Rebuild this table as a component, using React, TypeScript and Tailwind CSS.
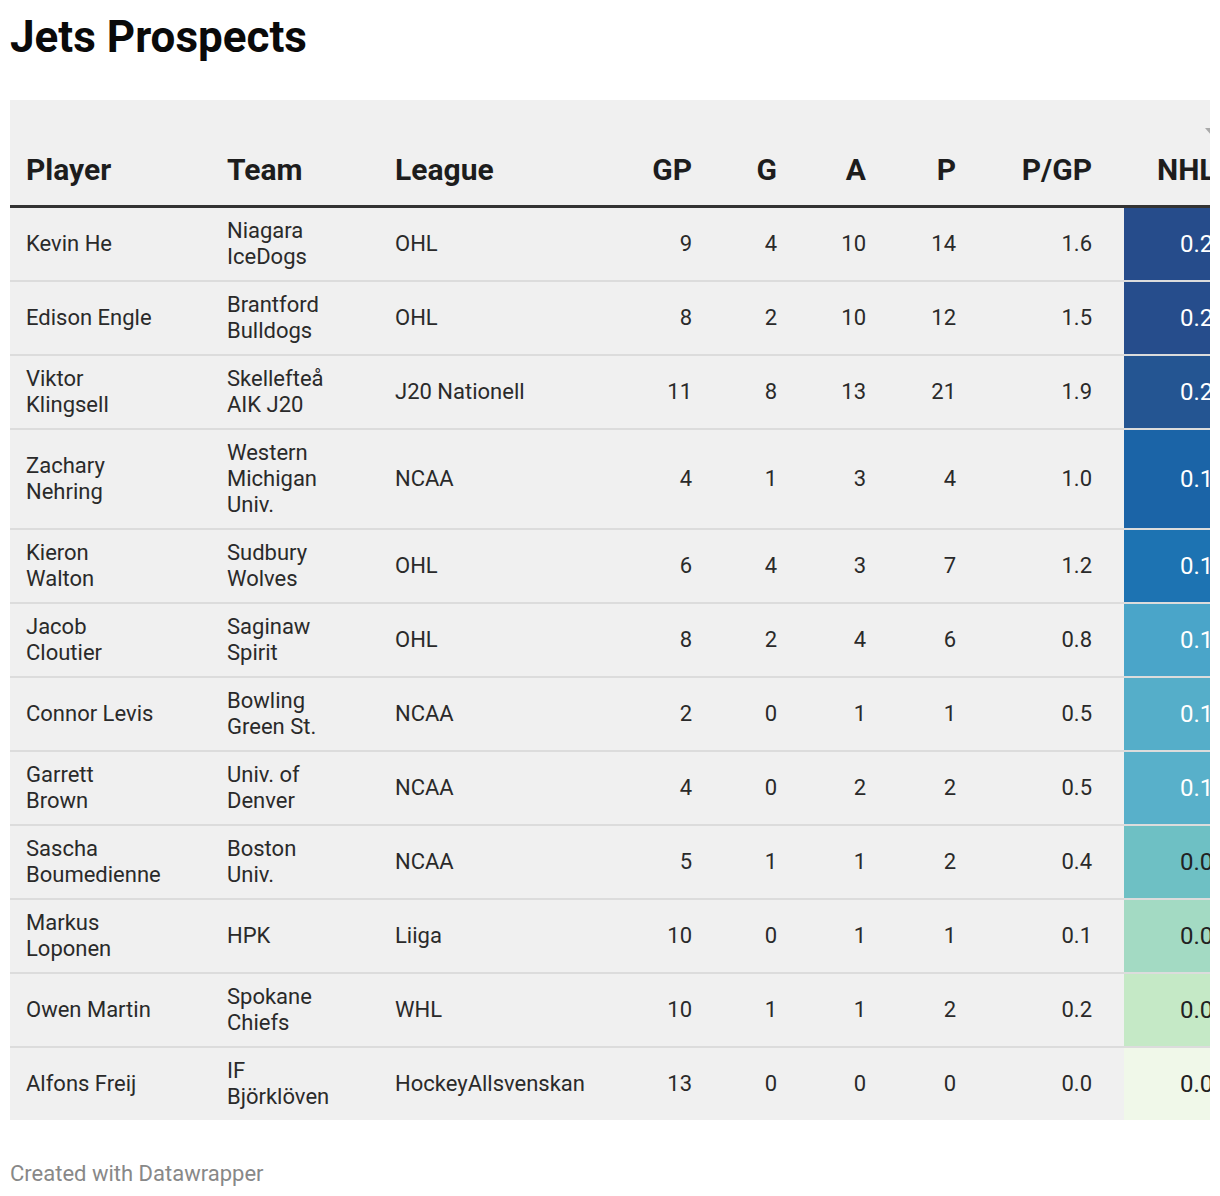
import React from "react";

type Row = {
  player: string;
  team: string;
  league: string;
  gp: number;
  g: number;
  a: number;
  p: number;
  pgp: string;
  nhl: string;
  bg: string;
  dark: boolean;
};

const rows: Row[] = [
  { player: "Kevin He", team: "Niagara IceDogs", league: "OHL", gp: 9, g: 4, a: 10, p: 14, pgp: "1.6", nhl: "0.26", bg: "bg-[#264c8b]", dark: true },
  { player: "Edison Engle", team: "Brantford Bulldogs", league: "OHL", gp: 8, g: 2, a: 10, p: 12, pgp: "1.5", nhl: "0.25", bg: "bg-[#264d8c]", dark: true },
  { player: "Viktor Klingsell", team: "Skellefteå AIK J20", league: "J20 Nationell", gp: 11, g: 8, a: 13, p: 21, pgp: "1.9", nhl: "0.23", bg: "bg-[#245592]", dark: true },
  { player: "Zachary Nehring", team: "Western Michigan Univ.", league: "NCAA", gp: 4, g: 1, a: 3, p: 4, pgp: "1.0", nhl: "0.18", bg: "bg-[#1b64a7]", dark: true },
  { player: "Kieron Walton", team: "Sudbury Wolves", league: "OHL", gp: 6, g: 4, a: 3, p: 7, pgp: "1.2", nhl: "0.16", bg: "bg-[#1d73b2]", dark: true },
  { player: "Jacob Cloutier", team: "Saginaw Spirit", league: "OHL", gp: 8, g: 2, a: 4, p: 6, pgp: "0.8", nhl: "0.11", bg: "bg-[#4aa5c9]", dark: true },
  { player: "Connor Levis", team: "Bowling Green St.", league: "NCAA", gp: 2, g: 0, a: 1, p: 1, pgp: "0.5", nhl: "0.10", bg: "bg-[#55aec9]", dark: true },
  { player: "Garrett Brown", team: "Univ. of Denver", league: "NCAA", gp: 4, g: 0, a: 2, p: 2, pgp: "0.5", nhl: "0.10", bg: "bg-[#58b0ca]", dark: true },
  { player: "Sascha Boumedienne", team: "Boston Univ.", league: "NCAA", gp: 5, g: 1, a: 1, p: 2, pgp: "0.4", nhl: "0.08", bg: "bg-[#6ec0c4]", dark: false },
  { player: "Markus Loponen", team: "HPK", league: "Liiga", gp: 10, g: 0, a: 1, p: 1, pgp: "0.1", nhl: "0.05", bg: "bg-[#a3dac3]", dark: false },
  { player: "Owen Martin", team: "Spokane Chiefs", league: "WHL", gp: 10, g: 1, a: 1, p: 2, pgp: "0.2", nhl: "0.03", bg: "bg-[#c5e9c6]", dark: false },
  { player: "Alfons Freij", team: "IF Björklöven", league: "HockeyAllsvenskan", gp: 13, g: 0, a: 0, p: 0, pgp: "0.0", nhl: "0.00", bg: "bg-[#f0f8e9]", dark: false },
];

const th = "pb-[17px] pt-[52px] text-[30px] font-bold leading-[36px] text-[#1d1d1d]";
const num = "py-[10px] pr-[16px] text-right align-middle";

export default function App() {
  return (
    <div className="min-h-[1196px] bg-white px-[10px] font-['Roboto',sans-serif] text-[#2a2a2a]">
      <h1 className="pt-[11px] text-[44px] font-bold leading-[52px] text-[#0a0a0a]">Jets Prospects</h1>

      <div className="mt-[37px] w-[1200px] overflow-hidden">
        <table className="w-[1264px] table-fixed border-collapse bg-[#f0f0f0] text-[22px] leading-[26px]">
          <colgroup>
            <col className="w-[201px]" />
            <col className="w-[168px]" />
            <col className="w-[241px]" />
            <col className="w-[88px]" />
            <col className="w-[85px]" />
            <col className="w-[89px]" />
            <col className="w-[90px]" />
            <col className="w-[152px]" />
            <col className="w-[150px]" />
          </colgroup>
          <thead>
            <tr className="border-b-[3px] border-[#333]">
              <th className={`${th} pl-[16px] text-left`}>Player</th>
              <th className={`${th} pl-[16px] text-left`}>Team</th>
              <th className={`${th} pl-[16px] text-left`}>League</th>
              <th className={`${th} pr-[16px] text-right`}>GP</th>
              <th className={`${th} pr-[16px] text-right`}>G</th>
              <th className={`${th} pr-[16px] text-right`}>A</th>
              <th className={`${th} pr-[16px] text-right`}>P</th>
              <th className={`${th} pr-[32px] text-right`}>P/GP</th>
              <th className={`${th} relative pl-[33px] text-left`}>
                NHLe
                <span className="absolute left-[81px] top-[28px] h-0 w-0 border-x-[6px] border-t-[7px] border-x-transparent border-t-[#aaa]" />
              </th>
            </tr>
          </thead>
          <tbody>
            {rows.map((r, i) => (
              <tr key={r.player} className={i < rows.length - 1 ? "border-b-2 border-[#dcdcdc]" : ""}>
                <td className="py-[10px] pl-[16px] align-middle">
                  <div className="w-[134px]">{r.player}</div>
                </td>
                <td className="py-[10px] pl-[16px] align-middle">
                  <div className="w-[112px]">{r.team}</div>
                </td>
                <td className="py-[10px] pl-[16px] align-middle">{r.league}</td>
                <td className={num}>{r.gp}</td>
                <td className={num}>{r.g}</td>
                <td className={num}>{r.a}</td>
                <td className={num}>{r.p}</td>
                <td className="py-[10px] pr-[32px] text-right align-middle">{r.pgp}</td>
                <td className={`${r.bg} py-[10px] pl-[56px] text-left align-middle text-[24px] ${r.dark ? "text-white" : "text-[#222]"}`}>
                  {r.nhl}
                </td>
              </tr>
            ))}
          </tbody>
        </table>
      </div>

      <div className="mt-[41px] text-[22px] leading-[26px] text-[#888]">Created with Datawrapper</div>
    </div>
  );
}
